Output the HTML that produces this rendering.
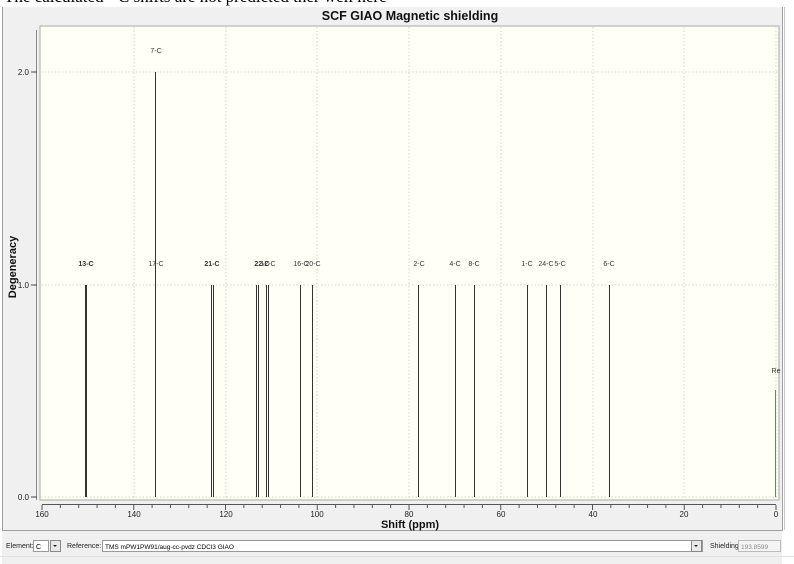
<!DOCTYPE html>
<html><head><style>
body{margin:0;width:794px;height:564px;overflow:hidden;background:#fff;font-family:"Liberation Sans",sans-serif;}
</style></head><body>
<svg width="794" height="564" xmlns="http://www.w3.org/2000/svg" style="position:absolute;left:0;top:0">
<text x="4" y="2" font-family="Liberation Serif" font-size="17" fill="#000">The calculated ¹³C shifts are not predicted ther well here</text>
<rect x="2" y="7" width="780" height="557" fill="#f0f0f0"/>
<line x1="2.5" y1="7" x2="2.5" y2="530" stroke="#a0a0a0"/>
<line x1="782.5" y1="7" x2="782.5" y2="530" stroke="#a0a0a0"/>
<line x1="784.5" y1="7" x2="784.5" y2="530" stroke="#c8c8c8"/>
<line x1="2" y1="530.5" x2="783" y2="530.5" stroke="#a0a0a0"/>
<text x="410" y="20" font-size="12.5" font-weight="bold" text-anchor="middle" fill="#111">SCF GIAO Magnetic shielding</text>
<rect x="40" y="26" width="739" height="474" fill="#fffff5" stroke="#a8a8a8"/>
<line x1="36.5" y1="30" x2="36.5" y2="500" stroke="#888"/>
<g stroke="#d4d4d4" stroke-dasharray="1.5,2">
<line x1="134" y1="27" x2="134" y2="499"/><line x1="226" y1="27" x2="226" y2="499"/><line x1="317" y1="27" x2="317" y2="499"/><line x1="409" y1="27" x2="409" y2="499"/><line x1="501" y1="27" x2="501" y2="499"/><line x1="593" y1="27" x2="593" y2="499"/><line x1="684" y1="27" x2="684" y2="499"/><line x1="776" y1="27" x2="776" y2="499"/>
<line x1="41" y1="72" x2="778" y2="72"/><line x1="41" y1="285" x2="778" y2="285"/><line x1="41" y1="497" x2="778" y2="497"/>
</g>
<g font-size="8" fill="#222" text-anchor="end"><text x="29" y="75">2.0</text><text x="29" y="288">1.0</text><text x="29" y="500">0.0</text></g>
<g stroke="#444"><line x1="31" y1="72" x2="37" y2="72"/><line x1="31" y1="285" x2="37" y2="285"/><line x1="31" y1="497" x2="37" y2="497"/></g>
<text transform="translate(16,267) rotate(-90)" font-size="11" font-weight="bold" text-anchor="middle" fill="#111">Degeneracy</text>
<line x1="42" y1="504.5" x2="776" y2="504.5" stroke="#555"/>
<g stroke="#555" id="ticks"></g>
<g font-size="8" fill="#222" text-anchor="middle"><text x="42" y="517">160</text><text x="134" y="517">140</text><text x="226" y="517">120</text><text x="317" y="517">100</text><text x="409" y="517">80</text><text x="501" y="517">60</text><text x="593" y="517">40</text><text x="684" y="517">20</text><text x="776" y="517">0</text></g>
<text x="410" y="528" font-size="11" font-weight="bold" text-anchor="middle" fill="#111">Shift (ppm)</text>
<g stroke="#333" stroke-width="1">
<line x1="85.5" y1="285" x2="85.5" y2="497"/><line x1="86.5" y1="285" x2="86.5" y2="497"/>
<line x1="155.5" y1="72" x2="155.5" y2="497"/>
<line x1="211.5" y1="285" x2="211.5" y2="497"/><line x1="213.5" y1="285" x2="213.5" y2="497"/>
<line x1="256.5" y1="285" x2="256.5" y2="497"/><line x1="258.5" y1="285" x2="258.5" y2="497"/>
<line x1="266.5" y1="285" x2="266.5" y2="497"/><line x1="268.5" y1="285" x2="268.5" y2="497"/>
<line x1="300.5" y1="285" x2="300.5" y2="497"/><line x1="312.5" y1="285" x2="312.5" y2="497"/>
<line x1="418.5" y1="285" x2="418.5" y2="497"/><line x1="455.5" y1="285" x2="455.5" y2="497"/>
<line x1="474.5" y1="285" x2="474.5" y2="497"/><line x1="527.5" y1="285" x2="527.5" y2="497"/>
<line x1="546.5" y1="285" x2="546.5" y2="497"/><line x1="560.5" y1="285" x2="560.5" y2="497"/>
<line x1="609.5" y1="285" x2="609.5" y2="497"/>
</g>
<line x1="775.5" y1="390" x2="775.5" y2="497" stroke="#6a6aff"/>
<g font-size="7" fill="#333" text-anchor="middle">
<text x="156" y="53">7-C</text><text x="86" y="266" font-weight="bold">13-C</text><text x="156" y="266">17-C</text>
<text x="212" y="266" font-weight="bold">21-C</text><text x="262" y="266" font-weight="bold">22-C</text><text x="268" y="266">12-C</text>
<text x="301" y="266">16-C</text><text x="313" y="266">20-C</text><text x="419" y="266">2-C</text><text x="455" y="266">4-C</text>
<text x="474" y="266">8-C</text><text x="527" y="266">1-C</text><text x="546" y="266">24-C</text><text x="560" y="266">5-C</text><text x="609" y="266">6-C</text>
<text x="776" y="373">Re</text></g>
<g font-size="7" fill="#222"><text x="6" y="548">Element:</text><text x="67" y="548">Reference:</text><text x="710" y="548">Shielding:</text></g>
<rect x="33.5" y="540.5" width="15" height="11" fill="#fff" stroke="#999"/><text x="36" y="549" font-size="7">C</text>
<rect x="50.5" y="540.5" width="10" height="11" fill="#e8e8e8" stroke="#888"/><path d="M53 545h4l-2 2z" fill="#222"/>
<rect x="102.5" y="540.5" width="600" height="11" fill="#fff" stroke="#999"/><text x="105" y="549" font-size="6.5">TMS mPW1PW91/aug-cc-pvdz CDCl3 GIAO</text>
<rect x="691.5" y="540.5" width="10" height="11" fill="#e8e8e8" stroke="#888"/><path d="M694 545h4l-2 2z" fill="#222"/>
<rect x="738.5" y="540.5" width="42" height="11" fill="#f4f4f4" stroke="#bbb"/><text x="741" y="549" font-size="6.5" fill="#888">193.8599</text>
<line x1="0" y1="556.5" x2="794" y2="556.5" stroke="#e0e0e0"/>
</svg>
<script>
var g=document.getElementById('ticks');var s='';
for(var p=0;p<=160;p+=4){var x=776-4.5875*p;s+='<line x1="'+x+'" y1="505" x2="'+x+'" y2="'+(p%20==0?510:508)+'"/>';}
g.innerHTML=s;
</script>
</body></html>
